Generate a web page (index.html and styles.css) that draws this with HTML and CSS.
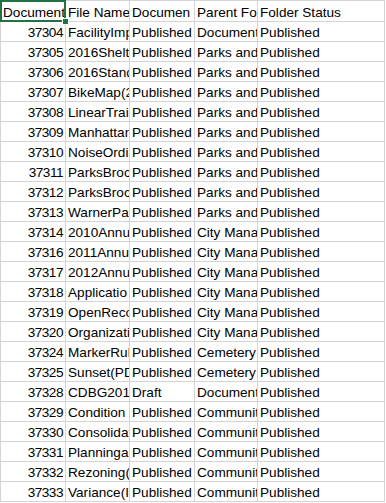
FILE: index.html
```html
<!DOCTYPE html>
<html>
<head>
<meta charset="utf-8">
<link rel="stylesheet" href="styles.css">
</head>
<body>
<div class="sheet">
  <div class="grid">
    <div class="c h">Document</div><div class="c h">File Name</div><div class="c h">Documen</div><div class="c h">Parent Fol</div><div class="c h">Folder Status</div>

    <div class="c n">37304</div><div class="c">FacilityImp</div><div class="c">Published</div><div class="c">Documents</div><div class="c">Published</div>
    <div class="c n">37305</div><div class="c">2016Shelte</div><div class="c">Published</div><div class="c">Parks and</div><div class="c">Published</div>
    <div class="c n">37306</div><div class="c">2016Stand</div><div class="c">Published</div><div class="c">Parks and</div><div class="c">Published</div>
    <div class="c n">37307</div><div class="c">BikeMap(2</div><div class="c">Published</div><div class="c">Parks and</div><div class="c">Published</div>
    <div class="c n">37308</div><div class="c">LinearTrail</div><div class="c">Published</div><div class="c">Parks and</div><div class="c">Published</div>
    <div class="c n">37309</div><div class="c">Manhattan</div><div class="c">Published</div><div class="c">Parks and</div><div class="c">Published</div>
    <div class="c n">37310</div><div class="c">NoiseOrdin</div><div class="c">Published</div><div class="c">Parks and</div><div class="c">Published</div>
    <div class="c n">37311</div><div class="c">ParksBroch</div><div class="c">Published</div><div class="c">Parks and</div><div class="c">Published</div>
    <div class="c n">37312</div><div class="c">ParksBroch</div><div class="c">Published</div><div class="c">Parks and</div><div class="c">Published</div>
    <div class="c n">37313</div><div class="c">WarnerPar</div><div class="c">Published</div><div class="c">Parks and</div><div class="c">Published</div>
    <div class="c n">37314</div><div class="c">2010Annua</div><div class="c">Published</div><div class="c">City Manag</div><div class="c">Published</div>
    <div class="c n">37316</div><div class="c">2011Annua</div><div class="c">Published</div><div class="c">City Manag</div><div class="c">Published</div>
    <div class="c n">37317</div><div class="c">2012Annua</div><div class="c">Published</div><div class="c">City Manag</div><div class="c">Published</div>
    <div class="c n">37318</div><div class="c">Applicatio</div><div class="c">Published</div><div class="c">City Manag</div><div class="c">Published</div>
    <div class="c n">37319</div><div class="c">OpenRecor</div><div class="c">Published</div><div class="c">City Manag</div><div class="c">Published</div>
    <div class="c n">37320</div><div class="c">Organizatio</div><div class="c">Published</div><div class="c">City Manag</div><div class="c">Published</div>
    <div class="c n">37324</div><div class="c">MarkerRul</div><div class="c">Published</div><div class="c">Cemetery</div><div class="c">Published</div>
    <div class="c n">37325</div><div class="c">Sunset(PD</div><div class="c">Published</div><div class="c">Cemetery</div><div class="c">Published</div>
    <div class="c n">37328</div><div class="c">CDBG2016</div><div class="c">Draft</div><div class="c">Documents</div><div class="c">Published</div>
    <div class="c n">37329</div><div class="c">Condition</div><div class="c">Published</div><div class="c">Communit</div><div class="c">Published</div>
    <div class="c n">37330</div><div class="c">Consolidat</div><div class="c">Published</div><div class="c">Communit</div><div class="c">Published</div>
    <div class="c n">37331</div><div class="c">Planningan</div><div class="c">Published</div><div class="c">Communit</div><div class="c">Published</div>
    <div class="c n">37332</div><div class="c">Rezoning(A</div><div class="c">Published</div><div class="c">Communit</div><div class="c">Published</div>
    <div class="c n">37333</div><div class="c">Variance(I</div><div class="c">Published</div><div class="c">Communit</div><div class="c">Published</div>
  </div>
  <div class="selection"><span class="handle"></span></div>
</div>
</body>
</html>
```
FILE: styles.css
```css
html, body {
  margin: 0;
  padding: 0;
  background: #ffffff;
}

.sheet {
  position: relative;
  width: 386px;
  height: 503px;
  overflow: hidden;
}

.grid {
  display: grid;
  width: max-content;
  grid-template-columns: 64px 63px 64px 62px 126px;
  grid-template-rows: 20px;
  grid-auto-rows: 19px;
  gap: 1px;
  padding: 1px;
  background: #d4d4d4;
  font-family: "Liberation Sans", Arial, sans-serif;
  font-size: 13.6px;
  color: #000000;
}

.c {
  background: #ffffff;
  display: flex;
  align-items: flex-end;
  overflow: hidden;
  white-space: nowrap;
  line-height: 16px;
  padding: 0 0 0 2px;
}

.n {
  justify-content: flex-end;
  padding: 0 2px 0 0;
  letter-spacing: -0.5px;
}

.selection {
  position: absolute;
  left: 0;
  top: 0;
  width: 66px;
  height: 22px;
  box-sizing: border-box;
  border: 2px solid #217346;
}

.handle {
  position: absolute;
  right: -5px;
  bottom: -5px;
  width: 5px;
  height: 5px;
  background: #217346;
  border: 1px solid #ffffff;
}
```
